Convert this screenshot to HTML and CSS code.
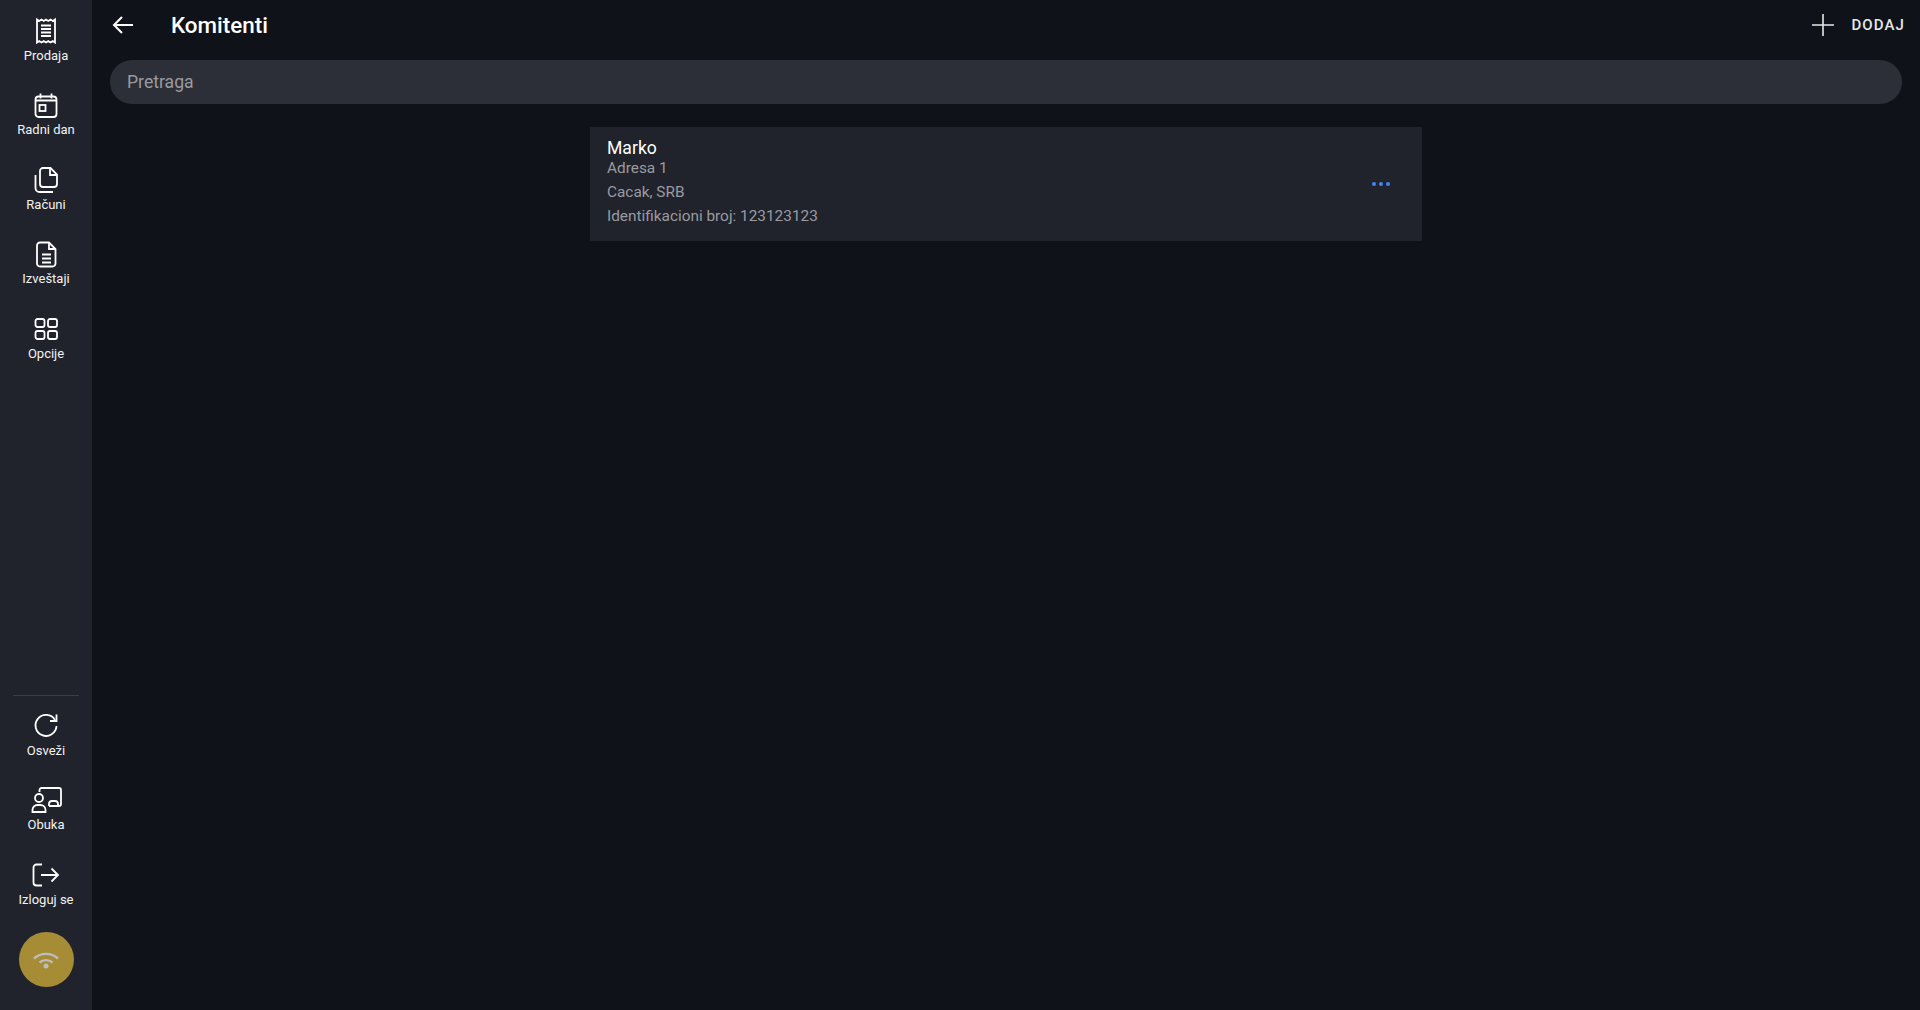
FILE: index.html
```html
<!DOCTYPE html>
<html lang="sr">
<head>
  <meta charset="UTF-8">
  <title>Komitenti</title>
  <link rel="stylesheet" href="styles.css">
</head>
<body>

  <nav class="sidebar">
    <div class="nav-group">
      <a class="nav-item">
        <svg class="nav-icon" viewBox="0 0 28 28"><path d="M5 2.500l2.250 1.500 2.250-1.500 2.250 1.500 2.250-1.500 2.250 1.500 2.250-1.500 2.250 1.500 2.250-1.500v23l-2.250-1.500-2.250 1.500-2.250-1.500-2.250 1.500-2.250-1.500-2.250 1.500-2.250-1.500-2.250 1.500z"/><path d="M9 8.500h10M9 12h10M9 15.500h10M9 19h10"/></svg>
        <span>Prodaja</span>
      </a>
      <a class="nav-item">
        <svg class="nav-icon" viewBox="0 0 28 28"><rect x="3.500" y="5.500" width="21" height="20.500" rx="3"/><path d="M3.500 9.500h21M8.500 2.500v5M19.500 2.500v5"/><rect x="7.500" y="14" width="6" height="6"/></svg>
        <span>Radni dan</span>
      </a>
      <a class="nav-item">
        <svg class="nav-icon" viewBox="0 0 28 28"><path d="M8 5a3 3 0 0 1 3-3h7.500l6.500 6.500V18a3 3 0 0 1-3 3H11a3 3 0 0 1-3-3z"/><path d="M18 2v7h7"/><path d="M3.500 9v13a4 4 0 0 0 4 4H21"/></svg>
        <span>Računi</span>
      </a>
      <a class="nav-item">
        <svg class="nav-icon" viewBox="0 0 28 28"><path d="M5 5.500a3 3 0 0 1 3-3h9l6.500 6.500v14.500a3 3 0 0 1-3 3H8a3 3 0 0 1-3-3z"/><path d="M17 2.500V9h6.500"/><path d="M10 14.500h9M10 18.500h9M10 22.500h9"/></svg>
        <span>Izveštaji</span>
      </a>
      <a class="nav-item">
        <svg class="nav-icon" viewBox="0 0 28 28"><rect x="3.500" y="4" width="9" height="8" rx="2"/><rect x="16" y="4" width="9" height="8" rx="2"/><rect x="3.500" y="16" width="9" height="8" rx="2"/><rect x="16" y="16" width="9" height="8" rx="2"/></svg>
        <span>Opcije</span>
      </a>
    </div>

    <div class="nav-group nav-bottom">
      <a class="nav-item">
        <svg class="nav-icon" viewBox="0 0 28 28"><path d="M23 8A10.500 10.500 0 1 0 24.500 14"/><path d="M24.500 2.500V9H18"/></svg>
        <span>Osveži</span>
      </a>
      <a class="nav-item">
        <svg class="nav-icon" viewBox="0 0 28 28"><path d="M7.500 6V4a2 2 0 0 1 2-2H27a2 2 0 0 1 2 2v14a2 2 0 0 1-2 2H17"/><circle cx="7" cy="12" r="4"/><path d="M0.500 26v-2a5 5 0 0 1 5-5h3a5 5 0 0 1 5 5v2z"/><path d="M17 20v-2a3 3 0 0 1 3-3h3a3 3 0 0 1 3 3v2"/></svg>
        <span>Obuka</span>
      </a>
      <a class="nav-item">
        <svg class="nav-icon" viewBox="0 0 28 28"><path d="M10 3.500H4.500a3 3 0 0 0-3 3v15a3 3 0 0 0 3 3H10"/><path d="M9 14h17M19.500 7.500L26 14l-6.500 6.500"/></svg>
        <span>Izloguj se</span>
      </a>
      <div class="status-dot">
        <svg viewBox="0 0 28 28"><path d="M2 12.500a18 18 0 0 1 24 0"/><path d="M7.500 16.500a10 10 0 0 1 13 0"/><circle cx="14" cy="20" r="2.500"/></svg>
      </div>
    </div>
  </nav>

  <main class="main">
    <header class="topbar">
      <div class="topbar-left">
        <svg class="back-icon" viewBox="0 0 24 24"><path d="M22 12H3M11 4l-8 8 8 8"/></svg>
        <h1>Komitenti</h1>
      </div>
      <button class="add-btn">
        <svg viewBox="0 0 24 24"><path d="M12 1v22M1 12h22"/></svg>
        <span>DODAJ</span>
      </button>
    </header>

    <div class="search">Pretraga</div>

    <section class="list">
      <article class="client-card">
        <div class="client-info">
          <div class="client-name">Marko</div>
          <div class="client-line">Adresa 1</div>
          <div class="client-line">Cacak, SRB</div>
          <div class="client-line">Identifikacioni broj: 123123123</div>
        </div>
        <div class="more-dots"><i></i><i></i><i></i></div>
      </article>
    </section>
  </main>

</body>
</html>
```

FILE: styles.css
```css
* {
  margin: 0;
  padding: 0;
  box-sizing: border-box;
}

body {
  font-family: Roboto, "Liberation Sans", sans-serif;
  background-color: #0f1219;
  color: #fff;
  height: 1010px;
  overflow: hidden;
  display: flex;
}

.sidebar {
  width: 92px;
  background-color: #20232b;
  display: flex;
  flex-direction: column;
  justify-content: space-between;
  padding-bottom: 23px;
}

.nav-group {
  display: flex;
  flex-direction: column;
  padding-top: 14.9px;
}

.nav-bottom {
  align-items: center;
  padding-top: 0;
}

.nav-bottom::before {
  content: "";
  width: 66px;
  height: 1px;
  background-color: #3a3d45;
  margin-bottom: 14px;
}

.nav-item {
  height: 74.5px;
  padding-top: 2px;
  display: flex;
  flex-direction: column;
  align-items: center;
  gap: 3px;
  font-size: 13px;
  line-height: 15px;
  color: #f2f2f2;
}

.nav-icon {
  width: 28px;
  height: 28px;
  flex: none;
  overflow: visible;
  fill: none;
  stroke: #fff;
  stroke-width: 1.8;
}

.status-dot {
  width: 55px;
  height: 55px;
  border-radius: 50%;
  background-color: #a68d35;
  display: flex;
  align-items: center;
  justify-content: center;
  margin-top: -1px;
}

.status-dot svg {
  width: 28px;
  height: 28px;
  fill: none;
  stroke: #bdbdbd;
  stroke-width: 2.4;
}

.status-dot circle {
  fill: #bdbdbd;
  stroke: none;
}

.main {
  flex: 1;
  min-width: 0;
  display: flex;
  flex-direction: column;
  padding: 0 18px;
}

.topbar {
  height: 60px;
  display: flex;
  align-items: center;
  justify-content: space-between;
  padding-bottom: 10px;
}

.topbar-left {
  display: flex;
  align-items: center;
  gap: 36px;
  margin-left: 1px;
}

.back-icon {
  width: 24px;
  height: 24px;
  fill: none;
  stroke: #fff;
  stroke-width: 2;
}

.topbar h1 {
  font-size: 22.4px;
  font-weight: 500;
}

.add-btn {
  display: flex;
  align-items: center;
  gap: 16px;
  background: none;
  border: none;
  color: #e8e8e8;
  font-family: inherit;
  font-size: 15px;
  font-weight: 500;
  letter-spacing: 1.1px;
  margin-right: -3px;
}

.add-btn svg {
  width: 24px;
  height: 24px;
  fill: none;
  stroke: #e8e8e8;
  stroke-width: 1.6;
}

.search {
  height: 44px;
  border-radius: 22px;
  background-color: #2c2f37;
  color: #9a9ba0;
  font-size: 17.6px;
  line-height: 44px;
  padding-left: 17px;
}

.list {
  display: flex;
  justify-content: center;
  padding-top: 23px;
}

.client-card {
  width: 832px;
  height: 114px;
  background-color: #20232b;
  display: flex;
  align-items: center;
  justify-content: space-between;
  padding: 0 32px 0 17px;
}

.client-info {
  padding-bottom: 3px;
}

.client-name {
  font-size: 17.6px;
  line-height: 20px;
  margin-bottom: -2px;
}

.client-line {
  font-size: 15.36px;
  line-height: 24px;
  color: #9a9ba0;
}

.more-dots {
  display: flex;
  gap: 3px;
}

.more-dots i {
  width: 4px;
  height: 4px;
  border-radius: 50%;
  background-color: #3b86f8;
}
```
